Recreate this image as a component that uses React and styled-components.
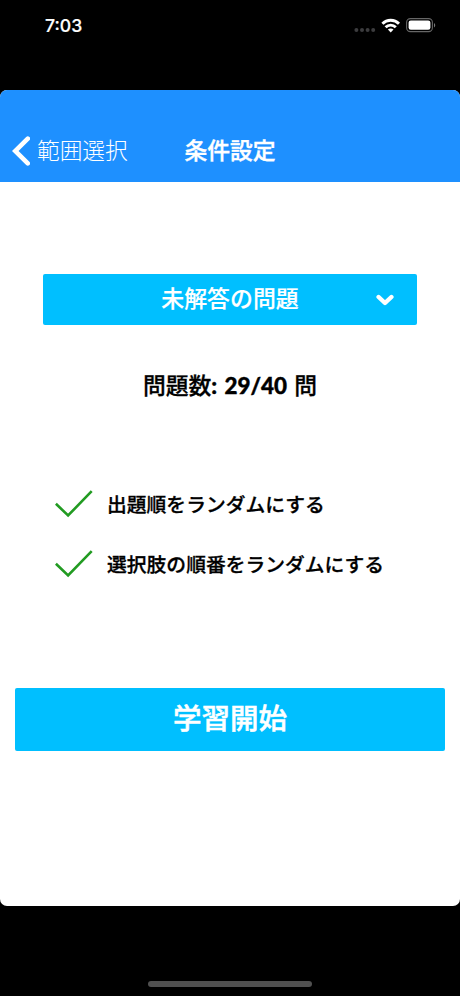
import React from 'react'
import styled, { createGlobalStyle } from 'styled-components'

const App = () => {
  let options = ["出題順をランダムにする", "選択肢の順番をランダムにする"]

  return (
    <>
      <GlobalStyle />
      <Screen>
        <StatusBar>
          <Clock>7:03</Clock>
          <StatusIcons viewBox="0 0 84 18">
            <g fill="#3c3c3e">
              <circle cx="3.4" cy="13" r="2" />
              <circle cx="9" cy="13" r="2" />
              <circle cx="14.6" cy="13" r="2" />
              <circle cx="20.2" cy="13" r="2" />
            </g>
            <g fill="none" stroke="#fff" strokeWidth="2.9">
              <path d="M29.4 6.7a11.6 11.6 0 0 1 16.6 0" />
              <path d="M32.6 10.2a7.2 7.2 0 0 1 10.2 0" />
            </g>
            <path d="M37.7 15.4l-2.8-2.8a3.9 3.9 0 0 1 5.6 0z" fill="#fff" />
            <rect x="53.6" y="1.6" width="25.8" height="13" rx="3.8" fill="none" stroke="#666" strokeWidth="1.1" />
            <rect x="55.6" y="3.5" width="21.8" height="9.2" rx="2.2" fill="#fff" />
            <path d="M81 6v4.4c1.7-.8 1.7-3.6 0-4.4z" fill="#777" />
          </StatusIcons>
        </StatusBar>
        <Card>
          <Header>
            <BackButton>
              <BackIcon viewBox="0 0 18 30">
                <path d="M15.8 2.6L3.2 15l12.6 12.4" />
              </BackIcon>
              範囲選択
            </BackButton>
            <Title>条件設定</Title>
          </Header>
          <Body>
            <Select>
              <span>未解答の問題</span>
              <ArrowIcon viewBox="0 0 18 12">
                <path d="M2.6 3L9 9l6.4-6" />
              </ArrowIcon>
            </Select>
            <Count>問題数<b>: 29/40 </b>問</Count>
            <Options>
              {options.map((label) => {
                return (
                  <Option key={label}>
                    <CheckIcon viewBox="0 0 38 28">
                      <path d="M.9 13.8L13.1 25.5 36.7 1.2" />
                    </CheckIcon>
                    {label}
                  </Option>
                )
              })}
            </Options>
            <StartButton>学習開始</StartButton>
          </Body>
        </Card>
        <HomeArea>
          <HomeBar />
        </HomeArea>
      </Screen>
    </>
  )
}

const GlobalStyle = createGlobalStyle`
body{
    margin: 0;
    background: #000;
}
*{
    box-sizing: border-box;
}
button{
    border: none;
    padding: 0;
    background: none;
    color: white;
    font-family: inherit;
}
svg{
    display: block;
    flex: none;
}
`
const Screen = styled.div`
display: flex;
flex-direction: column;
width: 460px;
height: 996px;
background: #000;
overflow: hidden;
font-family: Lato, "Noto Sans CJK JP", sans-serif;
`
const StatusBar = styled.div`
display: flex;
justify-content: space-between;
align-items: flex-start;
height: 90px;
padding: 16px 23px 0 45px;
`
const Clock = styled.div`
color: white;
font: 500 17.6px/20px Inter, sans-serif;
-webkit-text-stroke: 0.2px white;
`
const StatusIcons = styled.svg`
width: 84px;
height: 18px;
margin-top: 1px;
`
const Card = styled.div`
display: flex;
flex-direction: column;
height: 816px;
background: white;
border-radius: 7px;
overflow: hidden;
`
const Header = styled.div`
display: grid;
grid-template-columns: 1fr auto 1fr;
height: 92px;
padding: 40px 12px 0;
background: #1e90ff;
`
const BackButton = styled.button`
display: flex;
align-items: center;
gap: 7px;
height: 41px;
font-size: 22.7px;
font-weight: 300;
line-height: 41px;
`
const BackIcon = styled.svg`
width: 18px;
height: 30px;
fill: none;
stroke: white;
stroke-width: 4.6;
stroke-linecap: round;
`
const Title = styled.div`
color: white;
font-size: 22.8px;
font-weight: 500;
line-height: 41px;
-webkit-text-stroke: 0.4px white;
`
const Body = styled.div`
display: flex;
flex-direction: column;
padding: 92px 15px 0;
`
const Select = styled.button`
display: grid;
grid-template-columns: 1fr auto 1fr;
align-items: center;
height: 51px;
margin: 0 28px;
padding: 0 23px;
background: #00bfff;
border-radius: 2px;
font-size: 22.9px;
font-weight: 500;
line-height: 49px;
span{
    grid-column: 2;
    padding-bottom: 2px;
    -webkit-text-stroke: 0.2px white;
}
`
const ArrowIcon = styled.svg`
justify-self: end;
width: 18px;
height: 12px;
fill: none;
stroke: white;
stroke-width: 4.4;
stroke-linecap: round;
stroke-linejoin: round;
`
const Count = styled.div`
height: 40px;
margin-top: 40px;
color: #000;
font-size: 22.8px;
font-weight: 500;
line-height: 40px;
text-align: center;
-webkit-text-stroke: 0.3px #000;
b{
    font-size: 22.4px;
    font-weight: 900;
    word-spacing: 2px;
    -webkit-text-stroke: 0.4px #000;
}
`
const Options = styled.div`
display: flex;
flex-direction: column;
gap: 20px;
margin-top: 79px;
padding-left: 40px;
`
const Option = styled.label`
display: flex;
align-items: center;
gap: 14px;
height: 40px;
color: #000;
font-size: 19.8px;
font-weight: 500;
line-height: 40px;
white-space: nowrap;
-webkit-text-stroke: 0.3px #000;
`
const CheckIcon = styled.svg`
width: 38px;
height: 28px;
fill: none;
stroke: #229b22;
stroke-width: 2.6;
`
const StartButton = styled.button`
height: 63px;
margin-top: 104px;
padding-bottom: 2px;
background: #00bfff;
border-radius: 2px;
font-size: 28.5px;
font-weight: 500;
line-height: 61px;
-webkit-text-stroke: 0.5px white;
`
const HomeArea = styled.div`
display: flex;
flex: 1;
justify-content: center;
align-items: flex-end;
padding-bottom: 9px;
`
const HomeBar = styled.div`
width: 164px;
height: 6px;
border-radius: 3px;
background: #505050;
`
export default App
